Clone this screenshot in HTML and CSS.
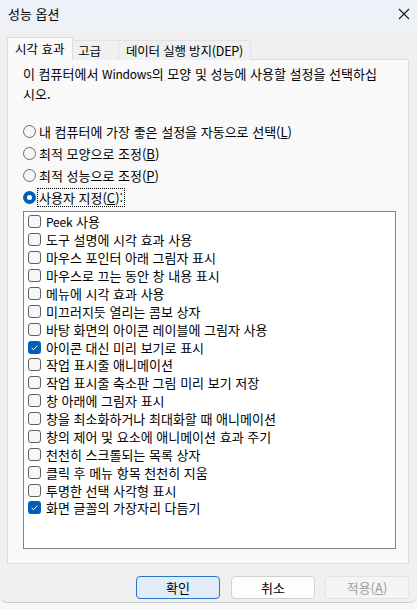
FILE: index.html
```html
<!DOCTYPE html>
<html lang="ko">
<head>
<meta charset="utf-8">
<title>성능 옵션</title>
<link rel="stylesheet" href="styles.css">
</head>
<body>
<div class="window">
  <div class="titlebar">
    <span class="title">성능 옵션</span>
    <svg class="close" width="12" height="12" viewBox="0 0 12 12"><path d="M1 1L11 11M11 1L1 11" stroke="#1a1a1a" stroke-width="1.1" fill="none"/></svg>
  </div>
  <div class="content">
    <div class="tabs">
      <div class="tab active">시각 효과</div>
      <div class="tab">고급</div>
      <div class="tab">데이터 실행 방지(DEP)</div>
    </div>
    <div class="panel">
      <p class="desc">이 컴퓨터에서 <span class="latin">Windows</span>의 모양 및 성능에 사용할 설정을 선택하십<br>시오.</p>
      <div class="radios">
        <div class="radio"><span class="dot"></span><span>내 컴퓨터에 가장 좋은 설정을 자동으로 선택(<u>L</u>)</span></div>
        <div class="radio"><span class="dot"></span><span>최적 모양으로 조정(<u>B</u>)</span></div>
        <div class="radio"><span class="dot"></span><span>최적 성능으로 조정(<u>P</u>)</span></div>
        <div class="radio"><span class="dot on"></span><span class="focus">사용자 지정(<u>C</u>):</span></div>
      </div>
      <div class="list">
        <div class="row"><span class="box"></span><span class="latin">Peek</span>&nbsp;사용</div>
        <div class="row"><span class="box"></span>도구 설명에 시각 효과 사용</div>
        <div class="row"><span class="box"></span>마우스 포인터 아래 그림자 표시</div>
        <div class="row"><span class="box"></span>마우스로 끄는 동안 창 내용 표시</div>
        <div class="row"><span class="box"></span>메뉴에 시각 효과 사용</div>
        <div class="row"><span class="box"></span>미끄러지듯 열리는 콤보 상자</div>
        <div class="row"><span class="box"></span>바탕 화면의 아이콘 레이블에 그림자 사용</div>
        <div class="row"><span class="box on"><svg width="13" height="13" viewBox="0 0 13 13"><path d="M3.6 6.8L5.5 8.6L9.4 4.6" stroke="#fff" stroke-width="1" fill="none"/></svg></span>아이콘 대신 미리 보기로 표시</div>
        <div class="row"><span class="box"></span>작업 표시줄 애니메이션</div>
        <div class="row"><span class="box"></span>작업 표시줄 축소판 그림 미리 보기 저장</div>
        <div class="row"><span class="box"></span>창 아래에 그림자 표시</div>
        <div class="row"><span class="box"></span>창을 최소화하거나 최대화할 때 애니메이션</div>
        <div class="row"><span class="box"></span>창의 제어 및 요소에 애니메이션 효과 주기</div>
        <div class="row"><span class="box"></span>천천히 스크롤되는 목록 상자</div>
        <div class="row"><span class="box"></span>클릭 후 메뉴 항목 천천히 지움</div>
        <div class="row"><span class="box"></span>투명한 선택 사각형 표시</div>
        <div class="row"><span class="box on"><svg width="13" height="13" viewBox="0 0 13 13"><path d="M3.6 6.8L5.5 8.6L9.4 4.6" stroke="#fff" stroke-width="1" fill="none"/></svg></span>화면 글꼴의 가장자리 다듬기</div>
      </div>
    </div>
    <div class="buttons">
      <button class="btn primary">확인</button>
      <button class="btn">취소</button>
      <button class="btn disabled">적용(<u>A</u>)</button>
    </div>
  </div>
</div>
<div class="under"></div>
</body>
</html>
```
FILE: styles.css
```css
html, body {
  margin: 0;
  padding: 0;
}
body {
  background: #f7f7f7;
  font-family: "Noto Sans CJK KR", "Noto Sans", sans-serif;
  font-size: 13px;
  color: #000;
  width: 417px;
  height: 609px;
  overflow: hidden;
}
.latin {
  font-size: 12px;
  letter-spacing: -0.2px;
}
.window {
  background: #f0f0f0;
  height: 603px;
  border-bottom: 1px solid #c9c9c9;
  border-radius: 0 0 7px 7px;
  box-sizing: border-box;
}
.titlebar {
  height: 29px;
  background: #eef2f8;
  display: flex;
  align-items: center;
  justify-content: space-between;
  padding: 0 8px 0 8px;
}
.title {
  font-size: 13px;
  line-height: 16px;
  margin-top: -1px;
}
.close {
  margin-right: -1px;
  margin-top: -1px;
}
.content {
  padding: 8px 8px 0 7px;
}
.tabs {
  display: flex;
  align-items: flex-end;
  height: 23px;
  margin-bottom: -1px;
  position: relative;
  z-index: 1;
  font-size: 12.5px;
}
.tab {
  height: 20px;
  line-height: 20px;
  box-sizing: border-box;
  border: 1px solid #e2e2e2;
  border-bottom: none;
  background: #f0f0f0;
  padding: 0 6px 0 5px;
  white-space: nowrap;
}
.tab + .tab {
  border-left: none;
}
.tab.active {
  height: 23px;
  line-height: 22px;
  background: #f9f9f9;
  width: 66px;
  padding-left: 7px;
  border-color: #dedede;
}
.tab:nth-child(2) {
  width: 46px;
}
.tab:nth-child(3) {
  width: 132px;
  padding-left: 7px;
  letter-spacing: -0.2px;
}
.panel {
  width: 402px;
  height: 505px;
  box-sizing: border-box;
  background: #f9f9f9;
  border: 1px solid #dedede;
  padding: 4px 0 0 15px;
}
.desc {
  margin: 0;
  line-height: 20px;
  white-space: nowrap;
}
.radios {
  margin-top: 16px;
}
.radio {
  display: flex;
  align-items: center;
  height: 22px;
  white-space: nowrap;
}
.dot {
  width: 13px;
  height: 13px;
  box-sizing: border-box;
  border: 1px solid #6b6b6b;
  border-radius: 50%;
  background: #f6f6f6;
  margin-right: 3px;
  flex: none;
}
.dot.on {
  border: 4px solid #005fb8;
  background: #fff;
}
.focus {
  outline: 1px dotted #000;
  outline-offset: 0;
  padding: 0 1px;
  line-height: 17px;
  margin-left: -1px;
}
.list {
  margin-top: 3px;
  width: 373px;
  height: 338px;
  box-sizing: border-box;
  border: 1px solid #848484;
  background: #fff;
  padding: 1px 0 0 4px;
}
.row {
  display: flex;
  align-items: center;
  height: 17.875px;
  white-space: nowrap;
}
.box {
  width: 13px;
  height: 13px;
  box-sizing: border-box;
  border: 1px solid #5f5f5f;
  border-radius: 3px;
  background: #f7f7f7;
  margin-right: 5px;
  flex: none;
  display: flex;
}
.box.on {
  border: none;
  background: #005fb8;
}
.buttons {
  display: flex;
  justify-content: flex-end;
  gap: 10px;
  margin-top: 12px;
  padding-right: 0;
}
.btn {
  width: 84px;
  height: 23px;
  box-sizing: border-box;
  border: 1px solid #d0d0d0;
  border-radius: 4px;
  background: #fdfdfd;
  font-family: "Noto Sans CJK KR", "Noto Sans", sans-serif;
  font-size: 13px;
  color: #000;
  padding: 0;
  line-height: 20px;
}
.btn.primary {
  background: #e0ecf8;
  border-color: #2a74c4;
  margin-right: 1px;
}
.btn.disabled {
  background: #f5f5f5;
  border-color: #e3e3e3;
  color: #9d9d9d;
}
.under {
  height: 5px;
}
```
